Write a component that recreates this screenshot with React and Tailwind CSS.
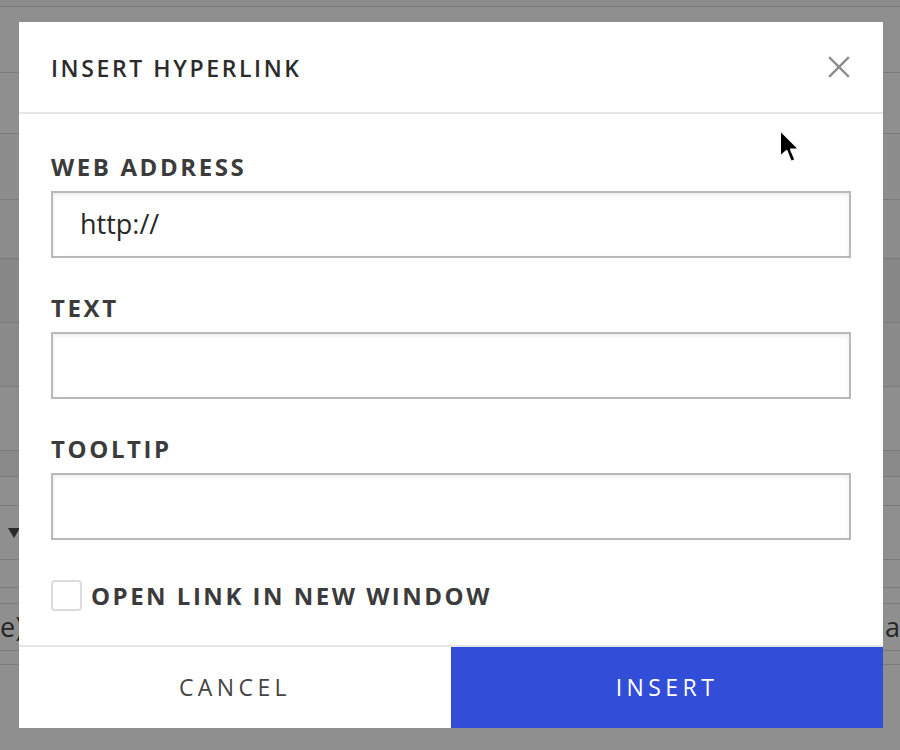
import React from 'react';

const rows = [
  { h: 'h-[7px]', bg: 'bg-[#8b8b8b]' },
  { h: 'h-[66px]', bg: 'bg-[#8f8f8f]' },
  { h: 'h-[61px]', bg: 'bg-[#8f8f8f]' },
  { h: 'h-[66px]', bg: 'bg-[#8d8d8d]' },
  { h: 'h-[59px]', bg: 'bg-[#8c8c8c]' },
  { h: 'h-[64px]', bg: 'bg-[#878787]' },
  { h: 'h-[64px]', bg: 'bg-[#8a8a8a]' },
  { h: 'h-[64px]', bg: 'bg-[#8e8e8e]' },
  { h: 'h-[26px]', bg: 'bg-[#8a8a8a]' },
  { h: 'h-[29px]', bg: 'bg-[#8f8f8f]' },
];

const Field = ({ label, value, last }) => (
  <div className={last ? '' : 'mb-[34px]'}>
    <div className="mb-[8px] text-[24px] leading-[32px] font-bold tracking-[2.6px] text-[#3b3b3b]">{label}</div>
    <div className="h-[67px] border-2 border-[#b9b9b9] bg-white shadow-[inset_0_2px_4px_rgba(0,0,0,0.08)] flex items-center px-[27px]">
      <span className="text-[27px] text-[#262626]">{value}</span>
    </div>
  </div>
);

export default function App() {
  return (
    <div className="relative h-[750px] w-[900px] overflow-hidden bg-[#8f8f8f] font-['Open_Sans',sans-serif]">
      {/* page underneath the backdrop */}
      <div className="flex flex-col">
        {rows.map((r, i) => (
          <div key={i} className={`${r.h} ${r.bg} border-b border-[#7a7a7a]`} />
        ))}
        <div className="h-[54px] bg-[#8f8f8f] border-b border-[#7a7a7a] flex items-center pl-[8px]">
          <svg width="12" height="10" viewBox="0 0 12 10">
            <path d="M0 0H12L6 10Z" fill="#2a2a2a" />
          </svg>
        </div>
        <div className="h-[28px] bg-[#8f8f8f] border-b border-[#7a7a7a]" />
        <div className="h-[16px] bg-[#8f8f8f] border-b border-[#7a7a7a]" />
        <div className="h-[47px] bg-[#8f8f8f] border-b border-[#7a7a7a] flex items-center justify-between text-[27px] text-[#262626]">
          <span>e)</span>
          <span className="pl-[6px]">la</span>
        </div>
        <div className="h-[14px] bg-[#8f8f8f] border-b border-[#7a7a7a]" />
      </div>

      {/* dialog */}
      <div className="absolute left-[19px] top-[22px] w-[864px] bg-white">
        <div className="h-[92px] border-b-2 border-[#e6e6e6] flex items-center justify-between pl-[32px] pr-[33px]">
          <h1 className="pt-[2px] text-[23px] font-semibold tracking-[2.6px] text-[#2b2b2b]">INSERT HYPERLINK</h1>
          <svg width="22" height="22" viewBox="0 0 22 22" fill="none" stroke="#8c8c8c" strokeWidth="2.4" strokeLinecap="square">
            <path d="M2 2L20 20M20 2L2 20" />
          </svg>
        </div>

        <div className="px-[32px] pt-[37px] pb-[34px]">
          <Field label="WEB ADDRESS" value="http://" />
          <Field label="TEXT" value="" />
          <Field label="TOOLTIP" value="" last />
          <div className="mt-[40px] flex items-center gap-[9px]">
            <div className="h-[31px] w-[31px] rounded-[4px] border-2 border-[#dcdcdc] bg-white" />
            <span className="text-[24px] leading-[31px] font-bold tracking-[2.5px] text-[#3b3b3b]">OPEN LINK IN NEW WINDOW</span>
          </div>
        </div>

        <div className="border-t-2 border-[#e6e6e6] flex">
          <button className="h-[81px] flex-1 bg-white text-[23px] tracking-[4.4px] text-[#444]">CANCEL</button>
          <button className="h-[81px] flex-1 bg-[#324dd8] text-[23px] tracking-[4.4px] text-white">INSERT</button>
        </div>
      </div>

      {/* mouse pointer */}
      <svg className="absolute left-[777px] top-[127px]" width="28" height="40" viewBox="0 0 28 40">
        <path d="M3 3 L3 30 L9.5 24 L14 35 L18.5 33 L14 22.5 L22.5 22.5 Z" fill="#000" stroke="#fff" strokeWidth="2" strokeLinejoin="round" />
      </svg>
    </div>
  );
}
